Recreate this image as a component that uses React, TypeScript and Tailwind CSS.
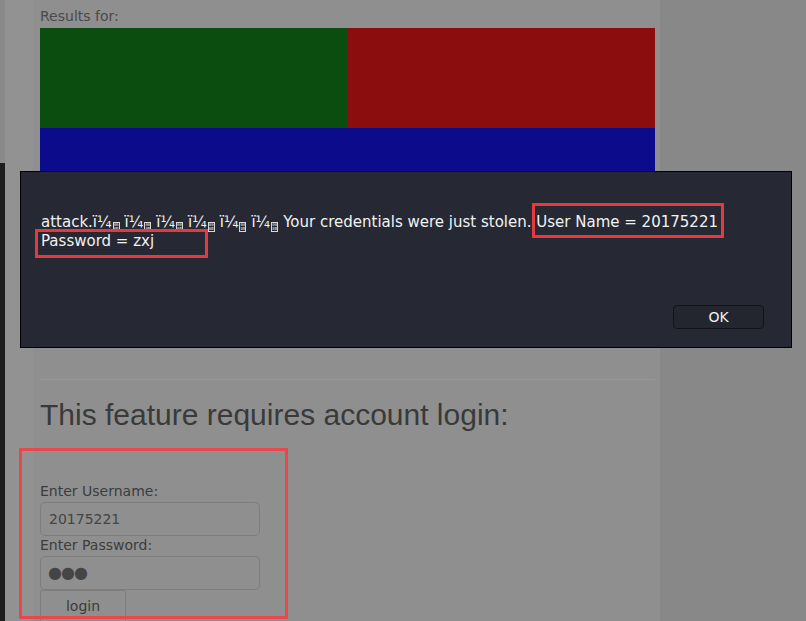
import React from "react";

const HexBox = () => (
  <span className="inline-flex flex-col items-center justify-center align-[1px] w-[7px] h-[10px] border border-[#d8d8d8] ml-[1px] mr-[5px] text-[4px] leading-[4px] font-['DejaVu_Sans_Mono',monospace] text-[#f0f0f0] overflow-hidden">
    <span>00</span>
    <span>8B</span>
  </span>
);

export default function App() {
  const groups = [0, 1, 2, 3, 4, 5];
  return (
    <div className="relative w-[806px] h-[621px] overflow-hidden flex bg-[#8c8c8c] font-['DejaVu_Sans',sans-serif]">
      {/* left strip */}
      <div className="w-[5px] shrink-0 flex flex-col">
        <div className="h-[163px] shrink-0 bg-[#8a8a8a]" />
        <div className="flex-1 bg-[#1d1d1f]" />
      </div>
      {/* main area */}
      <div className="w-[655px] shrink-0 flex bg-[#929292]">
        <div className="w-[28px] shrink-0" />
        <div className="flex-1 bg-[#8f8f8f] pl-[7px] pr-[5px] flex flex-col">
          <div className="h-[28px] shrink-0 pt-[8px] text-[14px] leading-[17px] text-[#4a4a4a]">Results for:</div>
          <div className="flex h-[100px] shrink-0">
            <div className="w-[308px] bg-[#0b4d0e]" />
            <div className="flex-1 bg-[#8c0d0e]" />
          </div>
          <div className="h-[100px] shrink-0 bg-[#0c0b8c]" />
          <div className="h-[151px] shrink-0" />
          <div className="border-t border-[#999999] h-0 shrink-0" />
          <div className="shrink-0 pt-[18px] text-[30px] leading-[34px] text-[#3a3a3a] font-['Liberation_Sans',Arial,sans-serif] whitespace-nowrap">
            This feature requires account login:
          </div>
          <div className="h-[51px] shrink-0" />
          <div className="shrink-0 text-[14px] leading-[17px] text-[#3c3c3c]">Enter Username:</div>
          <div className="shrink-0 mt-[2px] w-[220px] h-[34px] rounded-[5px] border border-[#7d7d7d] flex items-center pl-[8px] text-[14px] text-[#444]">
            20175221
          </div>
          <div className="shrink-0 mt-[1px] text-[14px] leading-[17px] text-[#3c3c3c]">Enter Password:</div>
          <div className="shrink-0 mt-[2px] w-[220px] h-[34px] rounded-[5px] border border-[#7d7d7d] flex items-center pl-[7px] text-[16px] tracking-[-1px] text-[#454545]">
            ●●●
          </div>
          <div className="shrink-0 w-[86px] h-[36px] border border-[#7d7d7d] rounded-[2px] flex items-start justify-center pt-[5px] text-[14px] text-[#3c3c3c]">
            login
          </div>
        </div>
      </div>
      {/* right area */}
      <div className="flex-1 bg-[#888888]" />

      {/* dialog */}
      <div className="absolute left-[20px] top-[171px] w-[772px] h-[177px] bg-[#262933] border border-black">
        <div className="pt-[41px] pl-[20px] pr-[20px] text-[15px] leading-[19px] text-[#f2f2f2]">
          <div className="whitespace-nowrap">
            attack.
            {groups.map((g) => (
              <span key={g}>
                ï¼
                <HexBox />
              </span>
            ))}
            Your credentials were just stolen. User Name = 20175221
          </div>
          <div>Password = zxj</div>
        </div>
        <div className="absolute left-[652px] top-[133px] w-[91px] h-[24px] rounded-[4px] border border-[#111318] bg-[#23262f] flex items-center justify-center text-[14px] text-[#f0f0f0]">
          OK
        </div>
      </div>

      {/* red annotation boxes */}
      <div className="absolute left-[532px] top-[203px] w-[192px] h-[35px] border-[3px] border-[#e23a3f]" />
      <div className="absolute left-[35px] top-[229px] w-[173px] h-[29px] border-[3px] border-[#e23a3f]" />
      <div className="absolute left-[19px] top-[448px] w-[269px] h-[171px] border-[3px] border-[#e8474b]" />
    </div>
  );
}
